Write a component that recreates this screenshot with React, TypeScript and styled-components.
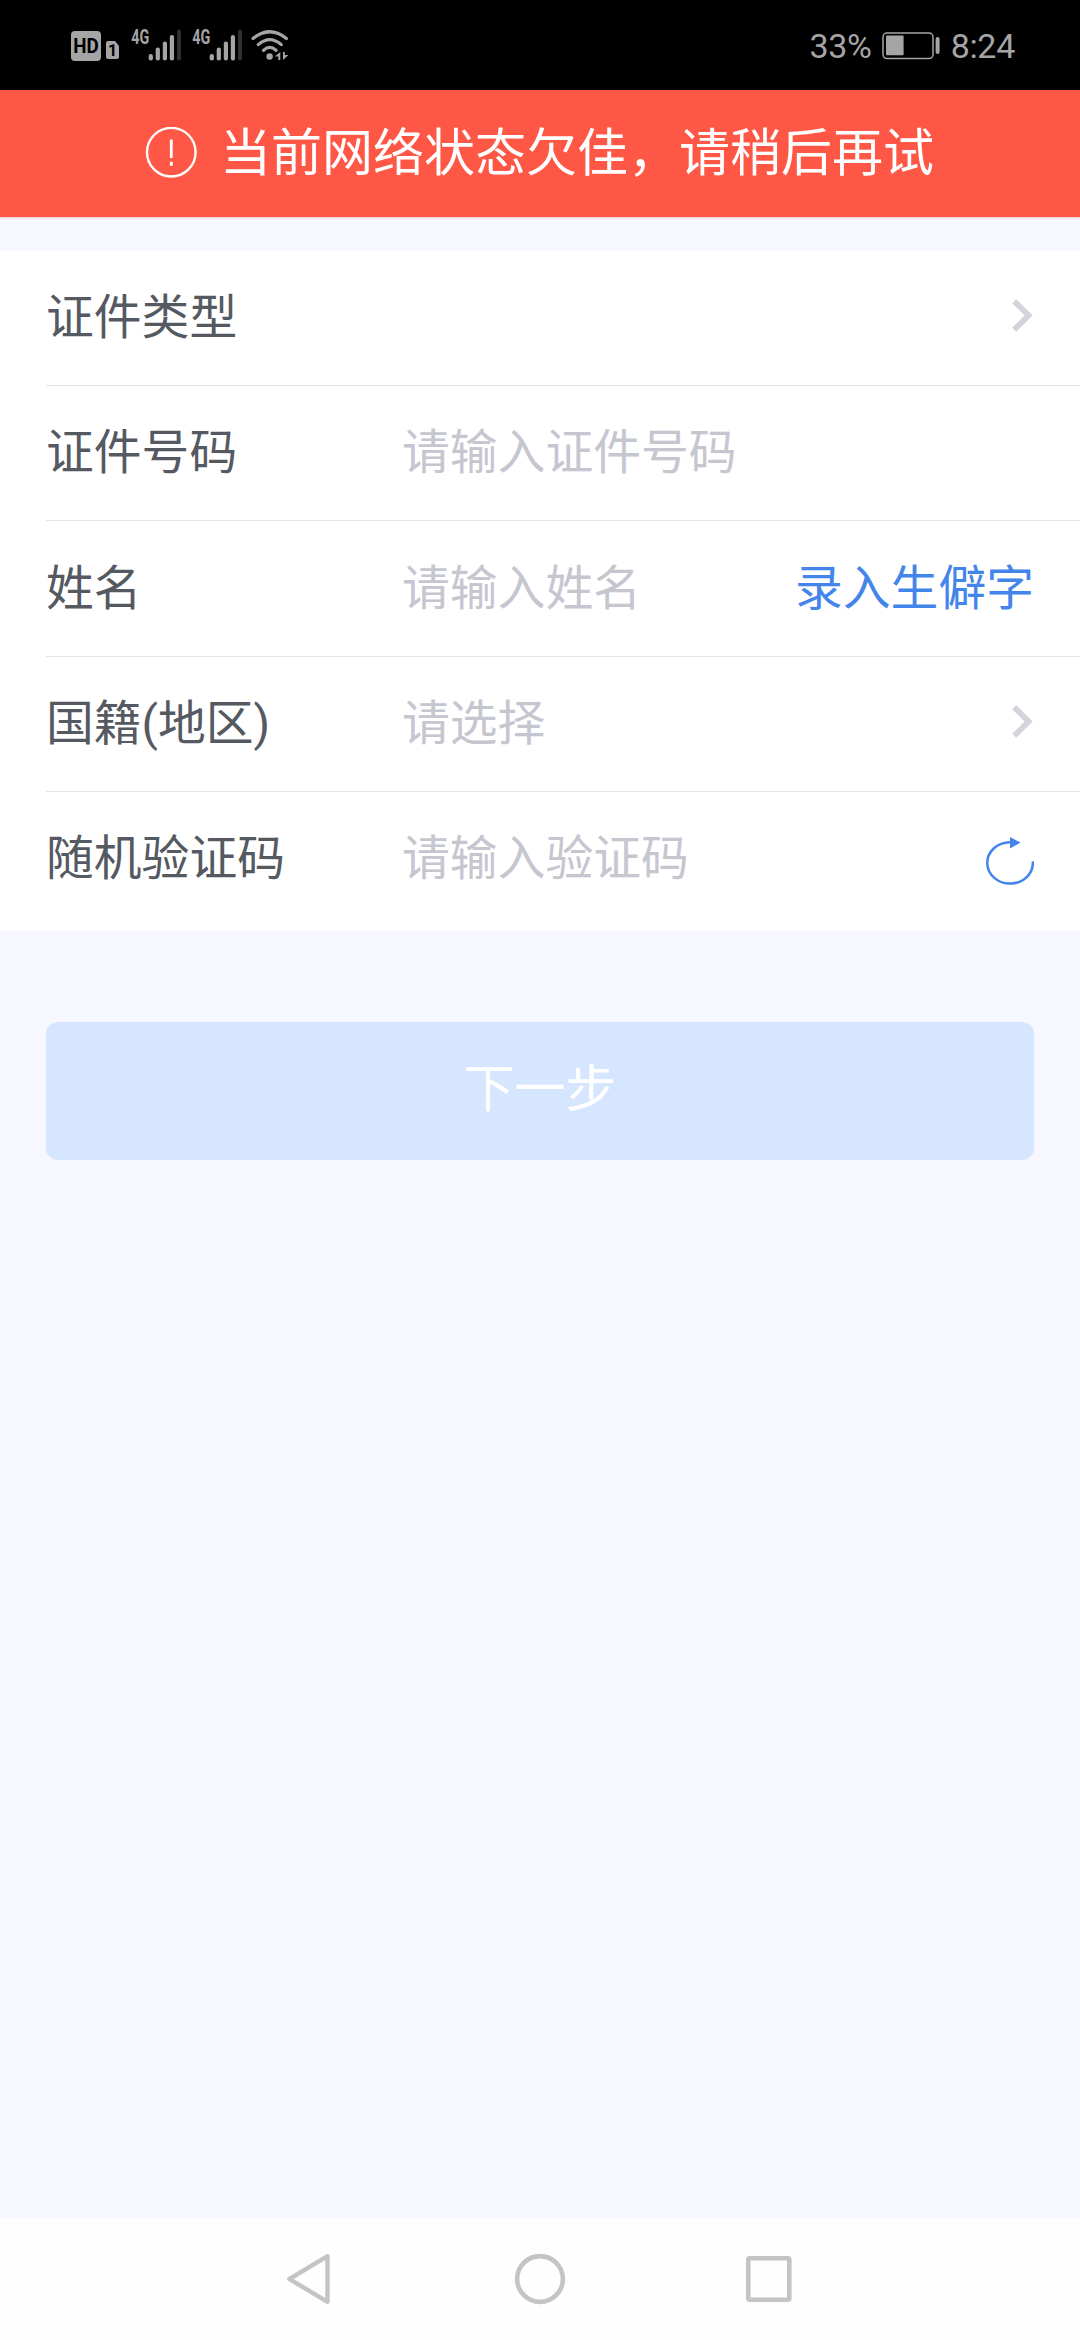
import React from "react";
import styled, { createGlobalStyle } from "styled-components";

const GlobalStyle = createGlobalStyle`
  * { box-sizing: border-box; }
  body { margin: 0; background: #f6f7ff; }
`;

const Screen = styled.main`
  display: flex;
  flex-direction: column;
  width: 1080px;
  height: 2340px;
  background: #f6f7ff;
  font-family: Roboto, "Noto Sans CJK SC", sans-serif;
  font-weight: 400;
`;

const StatusBar = styled.header`
  display: flex;
  align-items: center;
  justify-content: space-between;
  height: 90px;
  padding: 0 65px 0 71px;
  background: #000;
  color: #a5a4a6;
`;

const StatusGroup = styled.div`
  display: flex;
  align-items: center;
`;

const StatusText = styled.span<{ $left?: number }>`
  margin-left: ${(p) => p.$left ?? 0}px;
  padding-top: 2px;
  font: 400 34px/40px Roboto, sans-serif;
  letter-spacing: -0.3px;
`;

const StatusIcon = styled.svg<{ $left?: number }>`
  display: block;
  flex: none;
  height: 90px;
  margin-left: ${(p) => p.$left ?? 0}px;
`;

const Banner = styled.div`
  display: flex;
  align-items: center;
  height: 127px;
  padding-left: 145px;
  gap: 23px;
  background: #ff5745;
  color: #fff;
  box-shadow: 0 1px 2px rgba(255, 87, 69, 0.3);
`;

const BannerText = styled.span`
  font-size: 51px;
  line-height: 74px;
  white-space: nowrap;
`;

const Form = styled.section`
  display: flex;
  flex-direction: column;
  margin-top: 34px;
  padding-left: 46px;
  background: #fff;
`;

const Row = styled.div<{ $height: number; $last?: boolean }>`
  display: flex;
  align-items: center;
  height: ${(p) => p.$height}px;
  padding-right: 46px;
  border-bottom: ${(p) => (p.$last ? "0" : "1px solid #e4e4e6")};
  padding-bottom: ${(p) => (p.$last ? "4px" : "0")};
  font-size: 47.8px;
  line-height: 70px;
  white-space: nowrap;
`;

const Label = styled.label`
  width: 356px;
  color: #555962;
`;

const Value = styled.span`
  flex: 1;
  color: #c6c6d0;
`;

const Link = styled.a`
  color: #4385ea;
`;

const Glyph = styled.svg<{ $top?: number }>`
  display: block;
  flex: none;
  margin-top: ${(p) => p.$top ?? 0}px;
`;

const NextButton = styled.button`
  height: 138px;
  margin: 92px 46px 0;
  border: 0;
  border-radius: 12px;
  background: #d7e6ff;
  color: #fff;
  font: inherit;
  font-size: 51px;
  line-height: 74px;
  padding: 0 0 3px;
`;

const NavBar = styled.nav`
  display: flex;
  align-items: center;
  justify-content: center;
  gap: 170px;
  height: 122px;
  margin-top: auto;
  background: #fefefe;
`;

const Signal = ({ left }: { left: number }) => (
  <StatusIcon $left={left} width="50" viewBox="131 0 50 90" fill="#a5a4a6">
    <text x="131.2" y="43.7" fontFamily="Roboto, sans-serif" fontWeight="700" fontSize="19.5" textLength="18" lengthAdjust="spacingAndGlyphs">4G</text>
    <rect x="148.7" y="54" width="4.2" height="6.5" rx="2" />
    <rect x="155.7" y="47.5" width="4.2" height="13" rx="2" />
    <rect x="162.8" y="41.5" width="4.2" height="19" rx="2" />
    <rect x="169.8" y="35" width="4.2" height="25.5" rx="2" />
    <rect x="177" y="29.5" width="4" height="31" rx="2" fill="#303030" />
  </StatusIcon>
);

const Chevron = () => (
  <Glyph width="22" height="38" viewBox="0 0 22 38" fill="none" stroke="#d4d3dc" strokeWidth="5.8">
    <path d="M2.2 2.2 16.6 16.5 2.2 30.8" />
  </Glyph>
);

const Refresh = () => (
  <Glyph $top={5} width="49" height="50" viewBox="985 837 49 50" fill="none">
    <path d="M1010 842.2A22.8 20.7 0 1 0 1032.8 861.3" stroke="#4385ea" strokeWidth="2.5" />
    <path d="M1010 837 1020.5 842.6 1010 848.5Z" fill="#4385ea" />
  </Glyph>
);

type Field = { label: string; value?: string; height: number; action?: React.ReactNode };

const fields: Field[] = [
  { label: "证件类型", height: 135, action: <Chevron /> },
  { label: "证件号码", value: "请输入证件号码", height: 135 },
  { label: "姓名", value: "请输入姓名", height: 136, action: <Link>录入生僻字</Link> },
  { label: "国籍(地区)", value: "请选择", height: 135, action: <Chevron /> },
  { label: "随机验证码", value: "请输入验证码", height: 138, action: <Refresh /> },
];

export default function App() {
  return (
    <>
      <GlobalStyle />
      <Screen>
        <StatusBar>
          <StatusGroup>
            <StatusIcon width="48" viewBox="71 0 48 90" fill="#a5a4a6">
              <rect x="71" y="31" width="30" height="30" rx="4" />
              <text x="73.3" y="52.5" fill="#000" fontFamily="Roboto, sans-serif" fontWeight="700" fontSize="19.5" textLength="25.5" lengthAdjust="spacingAndGlyphs">HD</text>
              <path d="M108 41h7l4 5v11a2 2 0 0 1-2 2h-9a2 2 0 0 1-2-2v-14a2 2 0 0 1 2-2z" />
              <text x="108" y="56" fill="#000" fontFamily="Roboto, sans-serif" fontWeight="700" fontSize="16">1</text>
            </StatusIcon>
            <Signal left={12} />
            <Signal left={11} />
            <StatusIcon $left={9} width="38" viewBox="251 0 38 90" fill="none" stroke="#a5a4a6" strokeWidth="3.2" strokeLinecap="round">
              <path d="M253 38.5Q269.7 25 286.4 38.5M258.3 44.6Q269.7 34.5 281.3 44.6M263.5 50.3Q269.7 44.5 276 50.3" />
              <circle cx="269.6" cy="56.5" r="3.2" fill="#a5a4a6" stroke="none" />
              <path d="M280.3 52v8h-2v-3.4h-3.5zM283 60v-8h1.8v3h3.6z" fill="#a5a4a6" stroke="none" />
            </StatusIcon>
          </StatusGroup>
          <StatusGroup>
            <StatusText>33%</StatusText>
            <StatusIcon $left={10} width="58" viewBox="881 0 58 90" fill="#a5a4a6">
              <rect x="882" y="33" width="50" height="25.6" rx="4" fill="none" stroke="#a5a4a6" strokeWidth="1.5" />
              <rect x="885" y="35.6" width="17.6" height="19.6" rx="1" />
              <rect x="934.6" y="37" width="4" height="17" rx="2" />
            </StatusIcon>
            <StatusText $left={11}>8:24</StatusText>
          </StatusGroup>
        </StatusBar>

        <Banner role="alert">
          <Glyph width="52" height="54" viewBox="0 0 52 54" fill="none" stroke="#fff">
            <circle cx="26.3" cy="25.2" r="24.3" strokeWidth="2.4" />
            <path d="M26.3 12.5v18.5M26.3 34.8v4" strokeWidth="2.8" />
          </Glyph>
          <BannerText>当前网络状态欠佳，请稍后再试</BannerText>
        </Banner>

        <Form>
          {fields.map((f, i) => (
            <Row key={f.label} $height={f.height} $last={i === fields.length - 1}>
              <Label>{f.label}</Label>
              <Value>{f.value}</Value>
              {f.action}
            </Row>
          ))}
        </Form>

        <NextButton type="button">下一步</NextButton>

        <NavBar>
          <Glyph width="60" height="60" viewBox="280 2249 60 60" fill="none" stroke="#c5c3c5" strokeWidth="4.4" strokeLinejoin="round">
            <path d="M327.5 2256.2V2301.8L289.4 2279Z" />
          </Glyph>
          <Glyph width="60" height="60" viewBox="510 2249 60 60" fill="none" stroke="#c5c3c5" strokeWidth="4.6">
            <circle cx="540" cy="2279" r="22.9" />
          </Glyph>
          <Glyph width="60" height="60" viewBox="740 2249 60 60" fill="none" stroke="#c5c3c5" strokeWidth="4.6">
            <rect x="748.3" y="2258.3" width="41" height="41.4" rx="1.5" />
          </Glyph>
        </NavBar>
      </Screen>
    </>
  );
}
